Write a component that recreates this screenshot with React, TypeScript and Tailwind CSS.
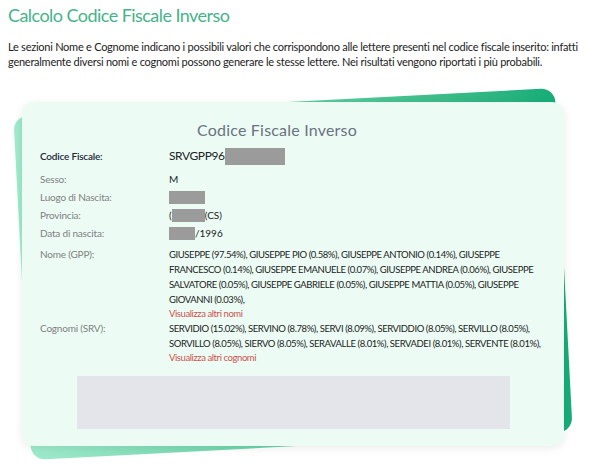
import React from 'react';

const names = [
  'GIUSEPPE (97.54%), GIUSEPPE PIO (0.58%), GIUSEPPE ANTONIO (0.14%), GIUSEPPE',
  'FRANCESCO (0.14%), GIUSEPPE EMANUELE (0.07%), GIUSEPPE ANDREA (0.06%), GIUSEPPE',
  'SALVATORE (0.05%), GIUSEPPE GABRIELE (0.05%), GIUSEPPE MATTIA (0.05%), GIUSEPPE',
  'GIOVANNI (0.03%),',
];

const surnames = [
  'SERVIDIO (15.02%), SERVINO (8.78%), SERVI (8.09%), SERVIDDIO (8.05%), SERVILLO (8.05%),',
  'SORVILLO (8.05%), SIERVO (8.05%), SERAVALLE (8.01%), SERVADEI (8.01%), SERVENTE (8.01%),',
];

const Hidden = ({ w }: { w: string }) => <span className={`inline-block h-[13px] bg-[#9b9b9b] ${w}`} />;

const Row = ({ label, children }: { label: string; children: React.ReactNode }) => (
  <div className="flex h-[18px] items-center">
    <div className="w-[129px] text-[10px] tracking-[-0.2px] text-[#808080]">{label}</div>
    <div className="flex items-center text-[10px] text-[#222]">{children}</div>
  </div>
);

export default function App() {
  return (
    <div className="w-[610px] h-[468px] overflow-hidden bg-white font-['Lato',sans-serif]">
      <div className="px-2 pt-[3px]">
        <h1 className="text-[18px] leading-[24px] tracking-[-0.55px] text-[#46b38a]">Calcolo Codice Fiscale Inverso</h1>
        <p className="mt-[12px] text-[11px] leading-[15px] tracking-[-0.25px] text-[#222] whitespace-nowrap">
          Le sezioni Nome e Cognome indicano i possibili valori che corrispondono alle lettere presenti nel codice fiscale inserito: infatti
          <br />
          generalmente diversi nomi e cognomi possono generare le stesse lettere. Nei risultati vengono riportati i più probabili.
        </p>
      </div>

      <div className="relative ml-[22px] mt-[33px] h-[344px] w-[542px]">
        <div className="absolute inset-0 -rotate-3 rounded-[14px] bg-gradient-to-r from-[#9eeacb] via-[#5fd0a2] to-[#14ad78]" />
        <div className="relative h-full rounded-[12px] bg-[#ecfcf5] pt-[18px] shadow-[0_2px_10px_rgba(0,0,0,0.08)]">
          <h2 className="pr-[32px] text-center text-[16px] leading-[20px] tracking-[0.2px] text-[#6b7280]">Codice Fiscale Inverso</h2>

          <div className="ml-[18px] mt-[5px]">
            <div className="flex h-[22px] items-center">
              <div className="w-[129px] text-[10px] font-semibold tracking-[-0.2px] text-[#1f2937]">Codice Fiscale:</div>
              <div className="flex items-center text-[12px] tracking-[-0.4px] text-[#222]">
                SRVGPP96
                <span className="inline-block h-[17px] w-[60px] bg-[#9b9b9b]" />
              </div>
            </div>
            <div className="mt-[3px]">
              <Row label="Sesso:">M</Row>
              <Row label="Luogo di Nascita:">
                <Hidden w="w-[36px]" />
              </Row>
              <Row label="Provincia:">
                <span className="text-[#222]">(</span>
                <Hidden w="w-[33px]" />
                (CS)
              </Row>
              <Row label="Data di nascita:">
                <Hidden w="w-[26px]" />
                /1996
              </Row>
            </div>

            <div className="mt-[5px] flex">
              <div className="w-[129px] text-[10px] leading-[15px] tracking-[-0.2px] text-[#808080]">Nome (GPP):</div>
              <div className="text-[9.5px] leading-[15px] tracking-[-0.42px] text-[#222] whitespace-nowrap">
                {names.map((l) => (
                  <div key={l}>{l}</div>
                ))}
                <div className="leading-[14px] text-[#cf524e]">Visualizza altri nomi</div>
              </div>
            </div>

            <div className="flex">
              <div className="w-[129px] text-[10px] leading-[15px] tracking-[-0.2px] text-[#808080]">Cognomi (SRV):</div>
              <div className="text-[9.5px] leading-[15px] tracking-[-0.42px] text-[#222] whitespace-nowrap">
                {surnames.map((l) => (
                  <div key={l}>{l}</div>
                ))}
                <div className="leading-[14px] text-[#cf524e]">Visualizza altri cognomi</div>
              </div>
            </div>
          </div>

          <div className="ml-[55px] mt-[11px] h-[53px] w-[433px] bg-[#e4e5ea]" />
        </div>
      </div>
    </div>
  );
}
